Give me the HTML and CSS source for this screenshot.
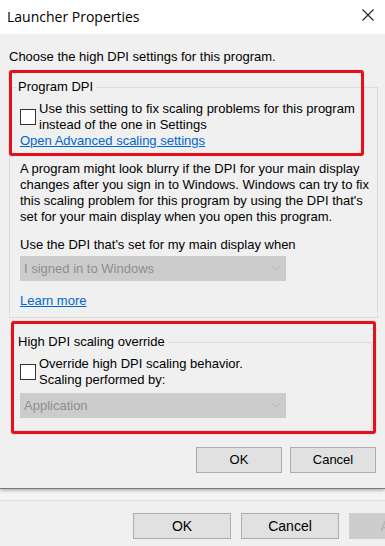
FILE: index.html
```html
<!DOCTYPE html>
<html lang="en">
<head>
	<meta charset="UTF-8">
	<meta name="viewport" content="width=device-width, initial-scale=1.0">
	<title>Launcher Properties</title>
	<link rel="stylesheet" href="styles.css">
</head>
<body>
	<div class="dialog">
		<div class="title-bar">
			<span class="title">Launcher Properties</span>
			<a href="#" class="btn-close">
				<svg width="12" height="12" viewBox="0 0 12 12"><path d="M0.5 0.5 L11.5 11.5 M11.5 0.5 L0.5 11.5" stroke="#222" stroke-width="1.1" fill="none"/></svg>
			</a>
		</div>
		<div class="dialog-body">
			<p class="intro">Choose the high DPI settings for this program.</p>

			<fieldset class="group group-dpi">
				<legend>Program DPI</legend>
				<label class="check-row">
					<span class="check-box"></span>
					<span class="check-text">Use this setting to fix scaling problems for this program<br>instead of the one in Settings</span>
				</label>
				<a href="#" class="link">Open Advanced scaling settings</a>
				<p class="note">A program might look blurry if the DPI for your main display<br>changes after you sign in to Windows. Windows can try to fix<br>this scaling problem for this program by using the DPI that's<br>set for your main display when you open this program.</p>
				<p class="select-label">Use the DPI that's set for my main display when</p>
				<div class="select">
					<span>I signed in to Windows</span>
					<svg width="8" height="5" viewBox="0 0 8 5"><path d="M0.5 0.5 L4 4 L7.5 0.5" stroke="#b3b3b3" fill="none"/></svg>
				</div>
				<a href="#" class="link link-more">Learn more</a>
			</fieldset>

			<fieldset class="group group-override">
				<legend>High DPI scaling override</legend>
				<label class="check-row">
					<span class="check-box"></span>
					<span class="check-text">Override high DPI scaling behavior.<br>Scaling performed by:</span>
				</label>
				<div class="select select-app">
					<span>Application</span>
					<svg width="8" height="5" viewBox="0 0 8 5"><path d="M0.5 0.5 L4 4 L7.5 0.5" stroke="#b3b3b3" fill="none"/></svg>
				</div>
			</fieldset>

			<div class="dialog-buttons">
				<button class="btn">OK</button>
				<button class="btn">Cancel</button>
			</div>
		</div>

		<!-- red marks drawn over the screenshot -->
		<div class="highlight highlight-dpi"></div>
		<div class="highlight highlight-override"></div>
	</div>

	<div class="parent-window">
		<div class="parent-top"></div>
		<div class="parent-buttons">
			<button class="btn btn-big">OK</button>
			<button class="btn btn-big">Cancel</button>
			<button class="btn btn-big btn-disabled">Apply</button>
		</div>
	</div>
</body>
</html>
```

FILE: styles.css
```css
body{
	margin: 0; width: 385px; height: 546px; overflow: hidden; background: #f0f0f0;
	font-family: "Liberation Sans", Arial, sans-serif; font-size: 13px; line-height: 16px; color: #000;
}
.dialog{
	position: relative; background: #f0f0f0;
	border-bottom: 1px solid #7a7a7a; box-shadow: 0 1px 4px rgba(0,0,0,.35);
}
.title-bar{
	display: flex; align-items: center; justify-content: space-between;
	height: 34px; padding: 0 11px 0 7px; background: #fff;
}
.title{font-family: "Open Sans", sans-serif; font-size: 14px; line-height: 16px; margin-bottom: 1px;}
.btn-close{display: flex; margin-bottom: 4px;}
.dialog-body{padding: 15px 0;}
.intro{margin: 0 0 14px 9px;}

.group{border: 1px solid #dcdcdc; margin: 0; min-width: 0;}
.group legend{margin-left: -4px; padding: 0 3px 0 2px;}
.group-dpi{margin: 0 7px 0 9px; padding: 6px 4px 8px 10px;}
.group-override{margin: 16px 13px 0 13px; padding: 6px 4px 12px 6px;}

.check-row{display: flex; align-items: center; gap: 3px; white-space: nowrap;}
.check-box{width: 14px; height: 14px; border: 1px solid #333; background: #fff; flex-shrink: 0;}
.link{display: block; width: max-content; color: #0066cc; text-decoration: underline;}
.link-more{margin-top: 12px;}
.note{margin: 12px 0; white-space: nowrap;}
.select-label{margin: 0;}
.select{
	display: flex; align-items: center; justify-content: space-between; box-sizing: border-box;
	width: 266px; height: 25px; margin-top: 3px; padding: 0 6px 0 4px; background: #ccc; color: #8e8e8e;
}
.select-app{margin-top: 5px;}

.dialog-buttons{display: flex; justify-content: flex-end; gap: 8px; margin-top: 16px; padding-right: 9px;}
.btn{
	box-sizing: border-box; height: 26px; width: 86px; padding: 0; flex-shrink: 0;
	border: 1px solid #adadad; background: #e1e1e1; font: inherit; color: #000;
}

.highlight{
	position: absolute; box-sizing: border-box; pointer-events: none;
	border: 3px solid #e3121a; border-radius: 3px; box-shadow: 0 0 1px rgba(227,18,26,.6);
}
.highlight-dpi{left: 9px; top: 70px; width: 355px; height: 86px;}
.highlight-override{left: 11px; top: 321px; width: 365px; height: 113px;}

.parent-top{height: 11px; background: #f5f5f5; border-bottom: 1px solid #e0e0e0;}
.parent-buttons{display: flex; gap: 10px; padding: 12px 0 0 133px; overflow: hidden;}
.btn-big{width: 98px; font-size: 14px;}
.btn-disabled{background: #cdcdcd; border-color: #cdcdcd; color: #b4b4b4;}
```
